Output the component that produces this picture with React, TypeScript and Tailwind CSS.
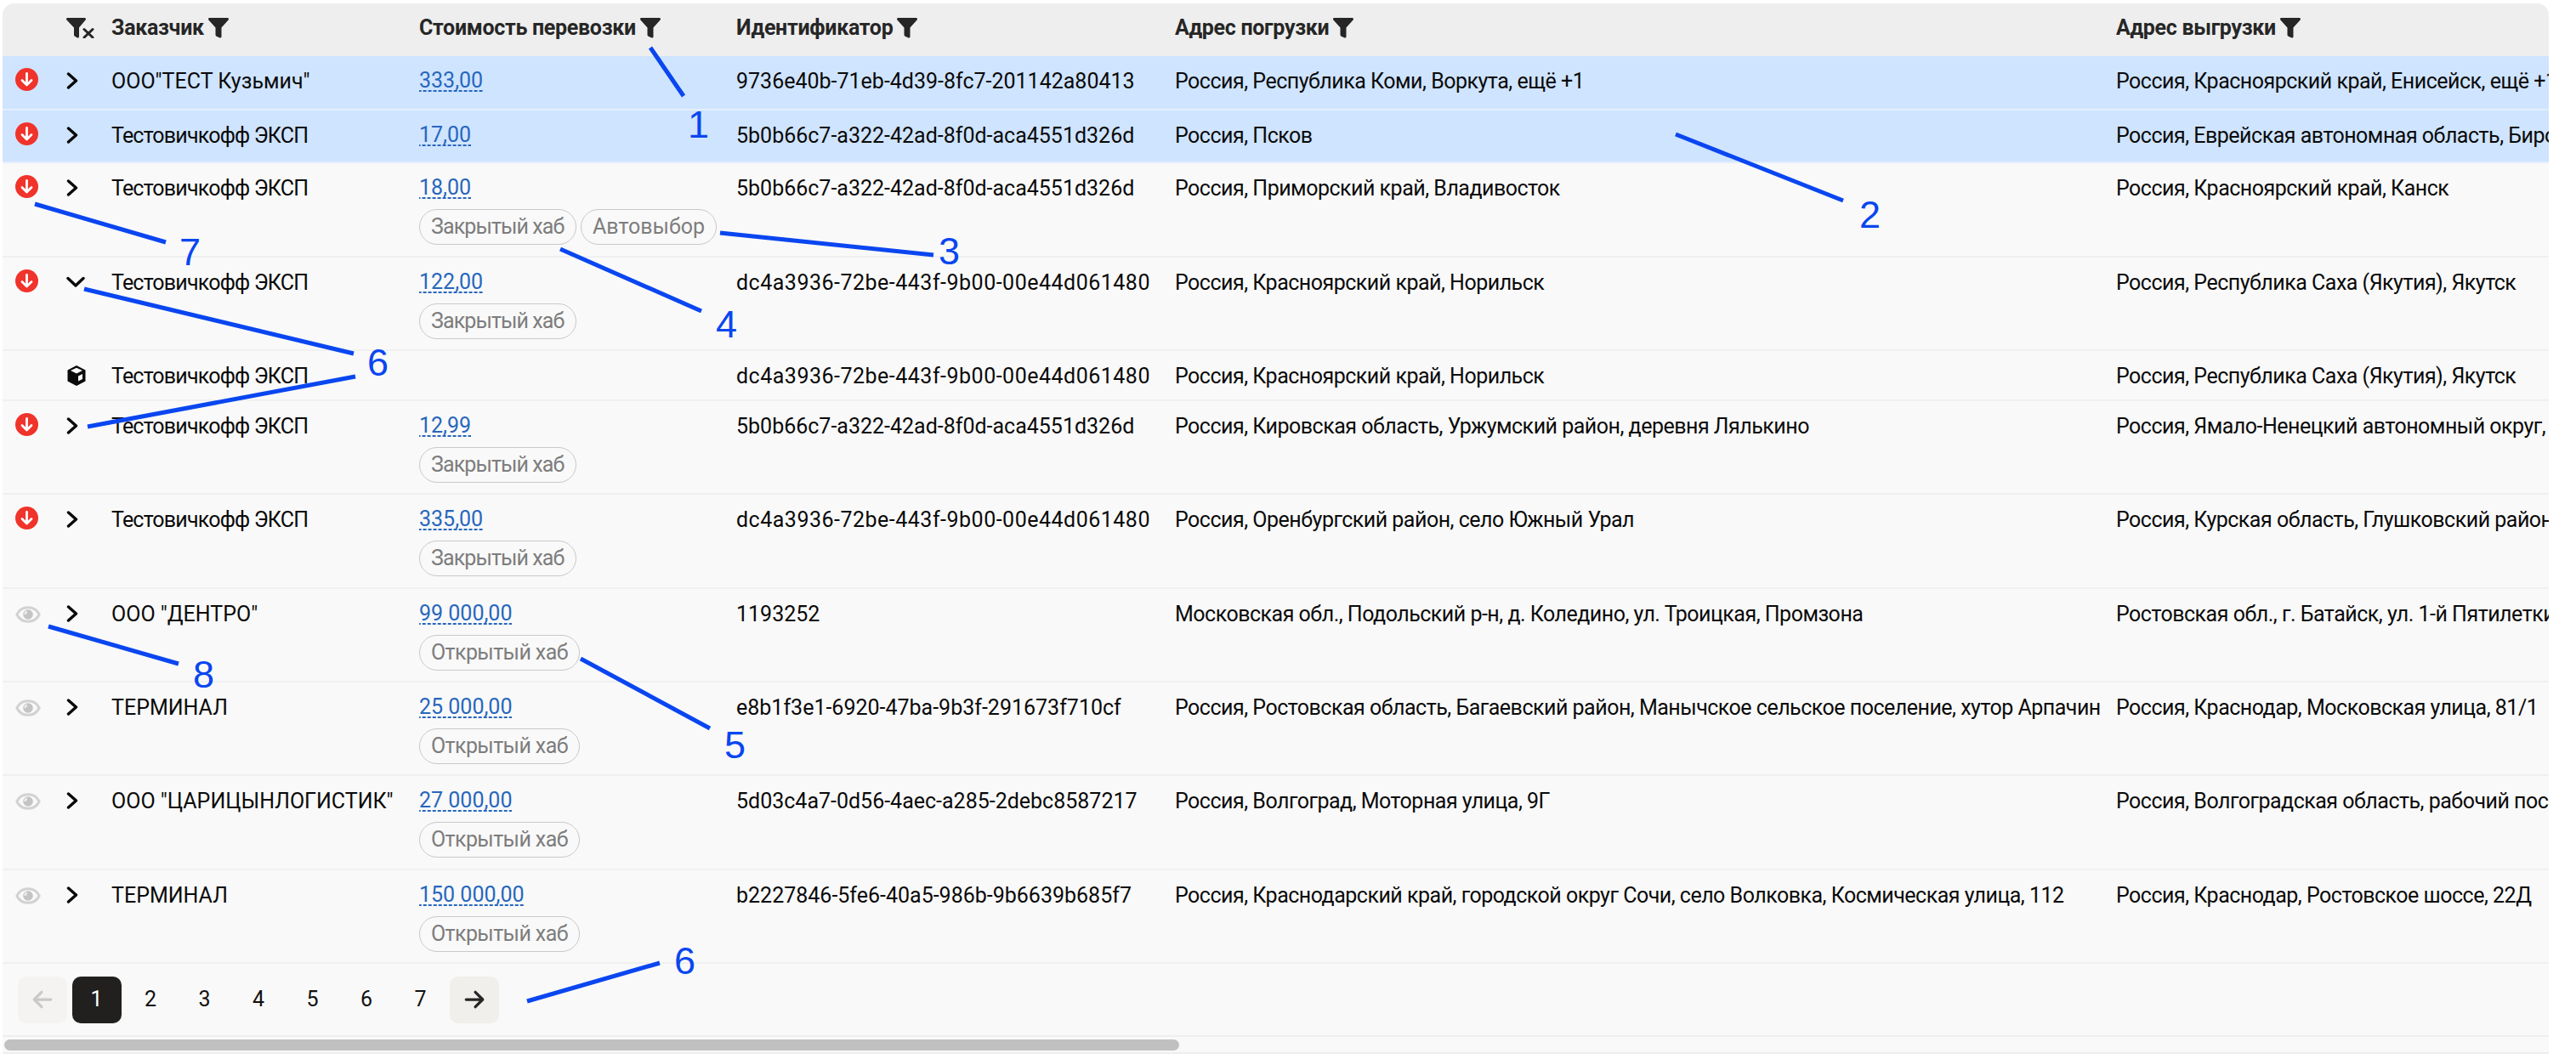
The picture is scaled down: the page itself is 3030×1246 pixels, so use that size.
import React from "react";

type Row = {
  status: "down" | "eye" | "none";
  chevron: "right" | "down" | "box";
  customer: string;
  cost?: string;
  tags?: string[];
  id: string;
  from: string;
  to: string;
  height: string;
  selected?: boolean;
};

const rows: Row[] = [
  { status: "down", chevron: "right", customer: 'ООО"ТЕСТ Кузьмич"', cost: "333,00", id: "9736e40b-71eb-4d39-8fc7-201142a80413", from: "Россия, Республика Коми, Воркута, ещё +1", to: "Россия, Красноярский край, Енисейск, ещё +1", height: "h-[64px]", selected: true },
  { status: "down", chevron: "right", customer: "Тестовичкофф ЭКСП", cost: "17,00", id: "5b0b66c7-a322-42ad-8f0d-aca4551d326d", from: "Россия, Псков", to: "Россия, Еврейская автономная область, Биробиджан", height: "h-[62px]", selected: true },
  { status: "down", chevron: "right", customer: "Тестовичкофф ЭКСП", cost: "18,00", tags: ["Закрытый хаб", "Автовыбор"], id: "5b0b66c7-a322-42ad-8f0d-aca4551d326d", from: "Россия, Приморский край, Владивосток", to: "Россия, Красноярский край, Канск", height: "h-[111px]" },
  { status: "down", chevron: "down", customer: "Тестовичкофф ЭКСП", cost: "122,00", tags: ["Закрытый хаб"], id: "dc4a3936-72be-443f-9b00-00e44d061480", from: "Россия, Красноярский край, Норильск", to: "Россия, Республика Саха (Якутия), Якутск", height: "h-[110px]" },
  { status: "none", chevron: "box", customer: "Тестовичкофф ЭКСП", id: "dc4a3936-72be-443f-9b00-00e44d061480", from: "Россия, Красноярский край, Норильск", to: "Россия, Республика Саха (Якутия), Якутск", height: "h-[59px]" },
  { status: "down", chevron: "right", customer: "Тестовичкофф ЭКСП", cost: "12,99", tags: ["Закрытый хаб"], id: "5b0b66c7-a322-42ad-8f0d-aca4551d326d", from: "Россия, Кировская область, Уржумский район, деревня Лялькино", to: "Россия, Ямало-Ненецкий автономный округ, Ноябрьск", height: "h-[110px]" },
  { status: "down", chevron: "right", customer: "Тестовичкофф ЭКСП", cost: "335,00", tags: ["Закрытый хаб"], id: "dc4a3936-72be-443f-9b00-00e44d061480", from: "Россия, Оренбургский район, село Южный Урал", to: "Россия, Курская область, Глушковский район", height: "h-[111px]" },
  { status: "eye", chevron: "right", customer: 'ООО "ДЕНТРО"', cost: "99 000,00", tags: ["Открытый хаб"], id: "1193252", from: "Московская обл., Подольский р-н, д. Коледино, ул. Троицкая, Промзона", to: "Ростовская обл., г. Батайск, ул. 1-й Пятилетки, 1", height: "h-[110px]" },
  { status: "eye", chevron: "right", customer: "ТЕРМИНАЛ", cost: "25 000,00", tags: ["Открытый хаб"], id: "e8b1f3e1-6920-47ba-9b3f-291673f710cf", from: "Россия, Ростовская область, Багаевский район, Манычское сельское поселение, хутор Арпачин", to: "Россия, Краснодар, Московская улица, 81/1", height: "h-[110px]" },
  { status: "eye", chevron: "right", customer: 'ООО "ЦАРИЦЫНЛОГИСТИК"', cost: "27 000,00", tags: ["Открытый хаб"], id: "5d03c4a7-0d56-4aec-a285-2debc8587217", from: "Россия, Волгоград, Моторная улица, 9Г", to: "Россия, Волгоградская область, рабочий посёлок", height: "h-[111px]" },
  { status: "eye", chevron: "right", customer: "ТЕРМИНАЛ", cost: "150 000,00", tags: ["Открытый хаб"], id: "b2227846-5fe6-40a5-986b-9b6639b685f7", from: "Россия, Краснодарский край, городской округ Сочи, село Волковка, Космическая улица, 112", to: "Россия, Краснодар, Ростовское шоссе, 22Д", height: "h-[110px]" },
];

const lines = [
  [765, 56, 804, 113],
  [1971, 158, 2168, 236],
  [847, 274, 1098, 300],
  [659, 293, 825, 366],
  [683, 775, 835, 857],
  [99, 340, 416, 416],
  [103, 502, 418, 443],
  [41, 240, 195, 285],
  [57, 737, 210, 781],
  [620, 1178, 776, 1133],
];

const numbers = [
  { text: "1", cls: "left-[809px] top-[121px]" },
  { text: "2", cls: "left-[2187px] top-[227px]" },
  { text: "3", cls: "left-[1104px] top-[270px]" },
  { text: "4", cls: "left-[842px] top-[356px]" },
  { text: "5", cls: "left-[852px] top-[851px]" },
  { text: "6", cls: "left-[432px] top-[401px]" },
  { text: "7", cls: "left-[211px] top-[271px]" },
  { text: "8", cls: "left-[227px] top-[768px]" },
  { text: "6", cls: "left-[793px] top-[1105px]" },
];

function Funnel({ className }: { className?: string }) {
  return (
    <svg viewBox="0 0 24 24" className={className} fill="#262626">
      <path d="M0 1.500C0 .7.600 0 1.500 0h21c.9 0 1.500.7 1.500 1.500 0 .4-.2.7-.4 1L15.500 11.500V22c0 1.300-1.400 2-2.500 1.300l-3.800-1.900c-.4-.3-.7-.8-.7-1.300v-8.600L.4 2.500C.2 2.200 0 1.900 0 1.500z" />
    </svg>
  );
}

function FilterClear() {
  return (
    <svg viewBox="0 0 34 24" className="w-[34px] h-[24px]" fill="#262626">
      <path d="M0 1.500C0 .7.600 0 1.500 0h20c.9 0 1.500.7 1.500 1.500 0 .4-.2.7-.4 1L15 11.500V22c0 1.300-1.400 2-2.500 1.300l-2.800-1.900c-.4-.3-.7-.8-.7-1.300v-8.600L.4 2.500C.2 2.200 0 1.900 0 1.500z" />
      <path d="M21 13.500l10 9.500M31 13.500L21 23" stroke="#262626" strokeWidth="3" strokeLinecap="round" fill="none" />
    </svg>
  );
}

function StatusIcon({ status }: { status: Row["status"] }) {
  if (status === "down") {
    return (
      <svg viewBox="0 0 27 27" className="w-[27px] h-[27px] mt-[14px]">
        <circle cx="13.500" cy="13.500" r="13.500" fill="#f0332b" />
        <path d="M13.500 6.500V19.500M8 14.500l5.500 5.500 5.500-5.500" stroke="#fff" strokeWidth="2.800" strokeLinecap="round" strokeLinejoin="round" fill="none" />
      </svg>
    );
  }
  if (status === "eye") {
    return (
      <svg viewBox="0 0 30 20" className="w-[30px] h-[20px] mt-[20px]">
        <path d="M1.800 10C4.500 4.500 9.500 1.800 15 1.800S25.500 4.500 28.200 10C25.500 15.500 20.500 18.200 15 18.200S4.500 15.500 1.800 10z" fill="none" stroke="#d2d2d2" strokeWidth="3" strokeLinejoin="round" />
        <circle cx="15" cy="10" r="5.800" fill="#c4c4c4" />
        <path d="M13.500 5.500a4.500 4.500 0 0 0-3 4.500 3 3 0 0 0 3-4.500z" fill="#f0f0f0" />
      </svg>
    );
  }
  return null;
}

function RowIcon({ kind }: { kind: Row["chevron"] }) {
  if (kind === "right") {
    return (
      <svg viewBox="0 0 14 20" className="w-[14px] h-[20px] mt-[19px]">
        <path d="M2.500 2L11.500 10l-9 8" stroke="#0a0a0a" strokeWidth="3.400" strokeLinecap="round" strokeLinejoin="round" fill="none" />
      </svg>
    );
  }
  if (kind === "down") {
    return (
      <svg viewBox="0 0 22 14" className="w-[22px] h-[14px] mt-[22px]">
        <path d="M2 2.500L11 11l9-8.500" stroke="#0a0a0a" strokeWidth="3.400" strokeLinecap="round" strokeLinejoin="round" fill="none" />
      </svg>
    );
  }
  return (
    <svg viewBox="0 0 24 24" className="w-[24px] h-[24px] mt-[17px]">
      <path d="M12 0l10.500 5.500v13L12 24 1.500 18.500v-13z" fill="#0a0a0a" />
      <path d="M5 6L12 2.800 19 6l-7 3.500z" fill="#f9f9f9" />
      <path d="M14 12.500l5-2.500v6l-5 2.500z" fill="#f9f9f9" />
    </svg>
  );
}

function Tag({ text }: { text: string }) {
  return (
    <span className={`inline-flex items-center h-[42px] px-[13px] rounded-full border border-[#c9c9c9] text-[#7d7d7d] ${text === "Автовыбор" ? "" : text === "Закрытый хаб" ? "tracking-[-0.9px]" : "tracking-[-0.6px]"}`}>
      {text}
    </span>
  );
}

function TableRow({ row }: { row: Row }) {
  return (
    <div className={`flex border-b-2 text-[#0a0a0a] ${row.height} ${row.selected ? "bg-[#cfe4ff] border-[#e4eefb]" : "border-[#f0f0f0]"}`}>
      <div className="w-[75px] pl-[15px] shrink-0">
        <StatusIcon status={row.status} />
      </div>
      <div className="w-[53px] shrink-0">
        <RowIcon kind={row.chevron} />
      </div>
      <div className={`w-[362px] pt-[11px] shrink-0 whitespace-nowrap ${row.customer === "Тестовичкофф ЭКСП" ? "tracking-[-0.8px]" : ""}`}>{row.customer}</div>
      <div className="w-[373px] pt-[18px] shrink-0 flex flex-col items-start">
        {row.cost && (
          <span className="leading-[21px] pb-[3px] text-[#2767bd] bg-[linear-gradient(90deg,#2767bd_4px,transparent_4px)] bg-[length:6px_2px] bg-bottom bg-repeat-x">{row.cost}</span>
        )}
        {row.tags && (
          <div className="flex gap-[5.500px] mt-[12px]">
            {row.tags.map((t) => (
              <Tag key={t} text={t} />
            ))}
          </div>
        )}
      </div>
      <div className={`w-[516px] pt-[11px] shrink-0 whitespace-nowrap ${row.id.startsWith("dc4a") ? "tracking-[0.5px]" : ""}`}>{row.id}</div>
      <div className="w-[1107px] pt-[11px] shrink-0 whitespace-nowrap overflow-hidden tracking-[-0.5px]">{row.from}</div>
      <div className="flex-1 pt-[11px] whitespace-nowrap overflow-hidden tracking-[-0.5px]">{row.to}</div>
    </div>
  );
}

function HeaderCell({ label, width }: { label: string; width: string }) {
  return (
    <div className={`${width} shrink-0 flex items-center gap-[5px] font-bold tracking-[-0.3px]`}>
      {label}
      <Funnel className="w-[24px] h-[24px]" />
    </div>
  );
}

export default function App() {
  return (
    <div className="relative w-[3030px] h-[1246px] bg-white overflow-hidden font-['Roboto',sans-serif] text-[25px]">
      <div className="ml-[3px] mt-[4px] w-[2995px]">
        <div className="rounded-t-[14px] overflow-hidden bg-[#f9f9f9]">
          <div className="flex h-[62px] pt-[10px] items-start bg-[#eeeeee] text-[#262626]">
            <div className="w-[75px] shrink-0" />
            <div className="w-[53px] shrink-0 pt-[7px]">
              <FilterClear />
            </div>
            <HeaderCell label="Заказчик" width="w-[362px]" />
            <HeaderCell label="Стоимость перевозки" width="w-[373px]" />
            <HeaderCell label="Идентификатор" width="w-[516px]" />
            <HeaderCell label="Адрес погрузки" width="w-[1107px]" />
            <HeaderCell label="Адрес выгрузки" width="flex-1" />
          </div>
          {rows.map((row, i) => (
            <TableRow key={i} row={row} />
          ))}
          <div className="flex items-center gap-[5.500px] h-[84px] pl-[18px] text-[#111]">
            <div className="w-[58px] h-[55px] rounded-[10px] bg-[#f4f3f1] flex items-center justify-center">
              <svg viewBox="0 0 24 24" className="w-[26px] h-[26px]">
                <path d="M21 12H4M11 4l-8 8 8 8" stroke="#c9c9c9" strokeWidth="3" fill="none" strokeLinecap="round" strokeLinejoin="round" />
              </svg>
            </div>
            <div className="w-[58px] h-[55px] rounded-[10px] bg-[#21201e] text-white flex items-center justify-center">1</div>
            {["2", "3", "4", "5", "6", "7"].map((n) => (
              <div key={n} className="w-[58px] h-[55px] flex items-center justify-center">{n}</div>
            ))}
            <div className="w-[58px] h-[55px] rounded-[10px] bg-[#f0efec] flex items-center justify-center">
              <svg viewBox="0 0 24 24" className="w-[26px] h-[26px]">
                <path d="M3 12h17M13 4l8 8-8 8" stroke="#262626" strokeWidth="3" fill="none" strokeLinecap="round" strokeLinejoin="round" />
              </svg>
            </div>
          </div>
        </div>
        <div className="h-[22px] bg-[#f9f9f9] border-y-2 border-[#eeeeee] flex items-center px-[2px]">
          <div className="w-[1382px] h-[13px] rounded-full bg-[#c0c0c0]" />
        </div>
      </div>

      {/* annotations on top of the screenshot */}
      <svg className="absolute inset-0 w-[3030px] h-[1246px] pointer-events-none" viewBox="0 0 3030 1246">
        {lines.map((l, i) => (
          <line key={i} x1={l[0]} y1={l[1]} x2={l[2]} y2={l[3]} stroke="#0a46f0" strokeWidth="5" />
        ))}
      </svg>
      {numbers.map((n, i) => (
        <div key={i} className={`absolute ${n.cls} font-['Liberation_Sans',sans-serif] text-[45px] leading-[52px] text-[#0a46f0]`}>
          {n.text}
        </div>
      ))}
    </div>
  );
}
